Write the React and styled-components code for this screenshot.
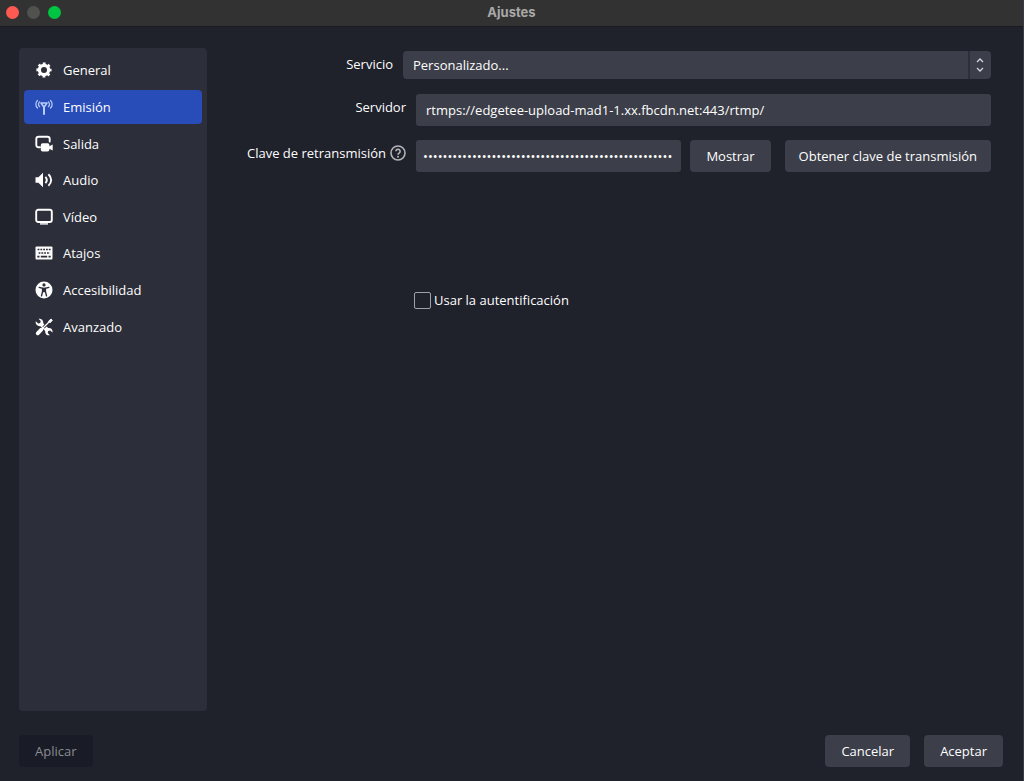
import { useState } from "react";
import styled, { createGlobalStyle } from "styled-components";

const GlobalStyle = createGlobalStyle`
  * {
    box-sizing: border-box;
  }

  body {
    margin: 0;
    background: #1f212b;
  }

  button,
  input,
  select {
    font: inherit;
    color: inherit;
  }
`;

/* Window */
const Window = styled.div`
  display: flex;
  flex-direction: column;
  min-height: 100vh;
  background: #1f212b;
  border-right: 1px solid #3a3c45;
  color: #fefefe;
  font-family: "Open Sans", sans-serif;
  font-size: 13px;
  line-height: 18px;
`;

const TitleBar = styled.header`
  display: grid;
  grid-template-columns: 1fr auto 1fr;
  align-items: center;
  height: 27px;
  padding: 0 6px 2px;
  background: #323232;
  border-bottom: 1px solid #191a20;
`;

const WindowControls = styled.div`
  display: flex;
  gap: 8px;
`;

const WindowControl = styled.button`
  width: 13px;
  height: 13px;
  padding: 0;
  border: none;
  border-radius: 50%;
  background: ${({ $color }) => $color};
`;

const Title = styled.h1`
  margin: 0;
  color: #a8a8a8;
  font-family: Inter, sans-serif;
  font-size: 13px;
  font-weight: 700;
  line-height: 18px;
`;

const Body = styled.div`
  display: flex;
  flex: 1;
  gap: 46px;
  padding: 21px 32px 24px 19px;
`;

/* Sidebar */
const Sidebar = styled.nav`
  flex: 0 0 188px;
  padding: 5px;
  border-radius: 4px;
  background: #2c2e39;
`;

const NavList = styled.ul`
  display: grid;
  grid-auto-rows: 1fr;
  gap: 2px;
  height: 291px;
  margin: 0;
  padding: 0;
  list-style: none;
`;

const NavItem = styled.a`
  display: flex;
  align-items: center;
  gap: 10px;
  height: 100%;
  padding: 0 11px;
  border-radius: 4px;
  background: ${({ $active }) => ($active ? "#284cb8" : "transparent")};
  color: inherit;
  text-decoration: none;
`;

const NavIcon = styled.svg`
  flex: none;
  width: 18px;
  height: 18px;
`;

/* Form */
const Form = styled.form`
  flex: 1;
  min-width: 0;
  padding-top: 3px;
`;

const Row = styled.div`
  display: grid;
  grid-template-columns: ${({ $label }) => $label}px minmax(0, 1fr);
  gap: 10px;
  align-items: start;
  margin-bottom: 14px;
`;

const Label = styled.label`
  display: flex;
  justify-content: flex-end;
  align-items: center;
  gap: 4px;
  padding-top: 4px;
  white-space: nowrap;
`;

const SelectBox = styled.div`
  position: relative;
  padding-bottom: 1px;
`;

const Select = styled.select`
  display: block;
  width: 100%;
  height: 28px;
  padding: 0 32px 0 10px;
  appearance: none;
  border: none;
  border-radius: 4px;
  background: #3c3e49;
`;

const SelectArrows = styled.svg`
  position: absolute;
  top: 0;
  right: 0;
  width: 23px;
  height: 28px;
  pointer-events: none;
`;

const Input = styled.input`
  display: block;
  flex: 1;
  width: 100%;
  min-width: 0;
  height: 32px;
  padding: 0 ${({ $pad }) => $pad}px;
  border: none;
  border-radius: 3px;
  background: #3c3e49;
`;

const KeyGroup = styled.div`
  display: flex;
  align-items: flex-end;
`;

const Button = styled.button`
  height: 32px;
  padding: 0 ${({ $wide }) => ($wide ? 14 : 16)}px;
  border: none;
  border-radius: 4px;
  background: #3c3e49;
  white-space: nowrap;

  &:disabled {
    background: #191b26;
    color: #8b8c92;
  }
`;

const KeyButton = styled(Button)`
  margin-left: ${({ $gap }) => $gap}px;
`;

const CheckLabel = styled.label`
  display: flex;
  align-items: center;
  gap: 3px;
  width: max-content;
  margin: 119px 0 0 161px;
`;

const Checkbox = styled.input`
  width: 17px;
  height: 17px;
  margin: 0;
  appearance: none;
  border: 1px solid #a0a1a6;
  border-radius: 2px;

  &:checked {
    background: #284cb8;
  }
`;

const Footer = styled.footer`
  display: flex;
  justify-content: space-between;
  padding: 0 20px 14px 19px;
`;

const FooterGroup = styled.div`
  display: flex;
  gap: 14px;
`;

/* Icons */
const GearIcon = () => (
  <NavIcon viewBox="0 0 18 18" aria-hidden="true">
    <circle cx="9" cy="9" r="4.6" fill="none" stroke="#fefefe" strokeWidth="3.2" />
    <circle cx="9" cy="9" r="6.6" fill="none" stroke="#fefefe" strokeWidth="2" strokeDasharray="2.8 2.38" strokeDashoffset="1.4" />
  </NavIcon>
);

const AntennaIcon = () => (
  <NavIcon viewBox="0 0 18 18" fill="none" stroke="#b9cdfa" strokeWidth="1.2" strokeLinecap="round" aria-hidden="true">
    <path d="M2.5 2.5C.3 4.5.3 8 2.5 10M4.6 3.8c-1.3 1.4-1.3 3.5 0 4.9M15.5 2.5c2.2 2 2.2 5.5 0 7.5M13.4 3.8c1.3 1.4 1.3 3.5 0 4.9" />
    <path d="M6 5h6L9 9.2Z" strokeWidth="1.6" strokeLinejoin="round" />
    <path d="M9 9v7" strokeWidth="2" />
  </NavIcon>
);

const OutputIcon = () => (
  <NavIcon viewBox="0 0 18 18" aria-hidden="true">
    <path d="M5 12.2H3.4A2.1 2.1 0 0 1 1.3 10V4a2.3 2.3 0 0 1 2.3-2.3h8.8A2.3 2.3 0 0 1 14.7 4v2.6" fill="none" stroke="#fefefe" strokeWidth="1.9" strokeLinecap="round" />
    <rect x="5.8" y="8.2" width="8.6" height="8.4" rx="1.8" fill="#fefefe" />
    <path d="m13.8 11.6 3.9-2.2v6.2l-3.9-2.2Z" fill="#fefefe" />
  </NavIcon>
);

const SpeakerIcon = () => (
  <NavIcon viewBox="0 0 18 18" aria-hidden="true">
    <path d="M.5 6.2h2.9L8 1.8v14.4l-4.6-4.4H.5Z" fill="#fefefe" />
    <path d="M10.4 5.8c1.7 1.9 1.7 4.5 0 6.4M13.4 3.3c3.7 3.3 3.7 8.1 0 11.4" fill="none" stroke="#fefefe" strokeWidth="1.9" />
  </NavIcon>
);

const MonitorIcon = () => (
  <NavIcon viewBox="0 0 18 18" aria-hidden="true">
    <rect x="1.2" y="1.8" width="15.6" height="12.2" rx="2" fill="none" stroke="#fefefe" strokeWidth="1.9" />
    <path d="M5 15.9h8" stroke="#fefefe" strokeWidth="1.4" />
  </NavIcon>
);

const KeyboardIcon = () => (
  <NavIcon viewBox="0 0 18 18" aria-hidden="true">
    <rect x=".5" y="2.5" width="17" height="13" rx="1" fill="#fefefe" />
    <g stroke="#2c2e39" strokeWidth="1.7">
      <path d="M2.6 5.5h13" strokeDasharray="1.8 1" />
      <path d="M3.6 9h11.5" strokeDasharray="1.8 1" />
      <path d="M2.3 12.6h2.2M5.8 12.6h6.4M13.5 12.6h2.2" />
    </g>
  </NavIcon>
);

const AccessibilityIcon = () => (
  <NavIcon viewBox="0 0 18 18" aria-hidden="true">
    <circle cx="9" cy="9" r="8.5" fill="#fefefe" />
    <circle cx="9" cy="3.9" r="1.6" fill="#2c2e39" />
    <path d="M4.2 6.4 7.6 7.3v3L6.5 14.8M13.8 6.4l-3.4.9v3l1.1 4.5" fill="none" stroke="#2c2e39" strokeWidth="1.4" strokeLinecap="round" />
    <path d="M7.2 6.7h3.6v4.5H7.2Z" fill="#2c2e39" />
  </NavIcon>
);

const ToolsIcon = () => (
  <NavIcon viewBox="0 0 18 18" aria-hidden="true">
    <path d="M.8 3.3 3.2 5.6l2-.5.5-2L3.500.8c2.400-.7 5.200 1.200 4.700 4.500l5 4.700c3.200-.5 5 2.200 4.200 4.600l-2.200-2.100-2 .5-.5 2 2.200 2.200c-2.500.7-5.200-1.100-4.700-4.300L5.400 8.200C2.100 8.600.1 5.800.8 3.300Z" fill="#fefefe" />
    <path d="m8.5 9.5 6.5-6.5" stroke="#2c2e39" strokeWidth="3" />
    <path d="m7 11 7.500-7.500" stroke="#fefefe" strokeWidth="1.3" />
    <path d="m13.5 3.2 2.6-2.2 1.2 1.2-2.2 2.6Z" fill="#fefefe" stroke="#fefefe" strokeLinejoin="round" />
    <path d="m2.7 15.3 3.6-3.6" stroke="#fefefe" strokeWidth="3.8" strokeLinecap="round" />
  </NavIcon>
);

const HelpSvg = styled.svg`
  flex: none;
  width: 16px;
  height: 16px;
`;

const HelpIcon = () => (
  <HelpSvg viewBox="0 0 16 16" fill="none" stroke="#b4b5b9" role="img" aria-label="Ayuda">
    <circle cx="8" cy="8" r="7" strokeWidth="1.6" />
    <path d="M5.9 6.3a2.1 2.1 0 1 1 3.2 1.8c-.8.5-1.1.8-1.1 1.6" strokeWidth="1.6" />
    <circle cx="8" cy="11.7" r="1" fill="#b4b5b9" stroke="none" />
  </HelpSvg>
);

const sections = [
  { name: "General", Icon: GearIcon },
  { name: "Emisión", Icon: AntennaIcon },
  { name: "Salida", Icon: OutputIcon },
  { name: "Audio", Icon: SpeakerIcon },
  { name: "Vídeo", Icon: MonitorIcon },
  { name: "Atajos", Icon: KeyboardIcon },
  { name: "Accesibilidad", Icon: AccessibilityIcon },
  { name: "Avanzado", Icon: ToolsIcon },
];

const App = () => {
  const [active, setActive] = useState("Emisión");
  const [server, setServer] = useState("rtmps://edgetee-upload-mad1-1.xx.fbcdn.net:443/rtmp/");
  const [streamKey, setStreamKey] = useState("x".repeat(51));
  const [showKey, setShowKey] = useState(false);
  const [useAuth, setUseAuth] = useState(false);

  return (
    <Window>
      <GlobalStyle />
      <TitleBar>
        <WindowControls>
          <WindowControl $color="#ff5a52" aria-label="Cerrar" />
          <WindowControl $color="#51514f" aria-label="Minimizar" />
          <WindowControl $color="#00c543" aria-label="Ampliar" />
        </WindowControls>
        <Title>Ajustes</Title>
      </TitleBar>

      <Body>
        <Sidebar>
          <NavList>
            {sections.map(({ name, Icon }) => (
              <li key={name}>
                <NavItem href="#" $active={name === active} onClick={() => setActive(name)}>
                  <Icon />
                  {name}
                </NavItem>
              </li>
            ))}
          </NavList>
        </Sidebar>

        <Form onSubmit={(e) => e.preventDefault()}>
          <Row $label={140}>
            <Label htmlFor="service">Servicio</Label>
            <SelectBox>
              <Select id="service">
                <option>Personalizado...</option>
              </Select>
              <SelectArrows viewBox="0 0 23 28" fill="none" aria-hidden="true">
                <path d="M1 0v28" stroke="#1f212b" />
                <path d="m9 11 3-3 3 3M9 17l3 3 3-3" stroke="#d6d7da" strokeWidth="1.3" />
              </SelectArrows>
            </SelectBox>
          </Row>

          <Row $label={153}>
            <Label htmlFor="server">Servidor</Label>
            <Input id="server" $pad={10} value={server} onChange={(e) => setServer(e.target.value)} />
          </Row>

          <Row $label={153}>
            <Label htmlFor="key">
              Clave de retransmisión
              <HelpIcon />
            </Label>
            <KeyGroup>
              <Input
                id="key"
                $pad={7}
                type={showKey ? "text" : "password"}
                value={streamKey}
                onChange={(e) => setStreamKey(e.target.value)}
              />
              <KeyButton type="button" $gap={9} onClick={() => setShowKey(!showKey)}>
                Mostrar
              </KeyButton>
              <KeyButton type="button" $gap={14} $wide>
                Obtener clave de transmisión
              </KeyButton>
            </KeyGroup>
          </Row>

          <CheckLabel>
            <Checkbox type="checkbox" checked={useAuth} onChange={(e) => setUseAuth(e.target.checked)} />
            Usar la autentificación
          </CheckLabel>
        </Form>
      </Body>

      <Footer>
        <Button disabled>Aplicar</Button>
        <FooterGroup>
          <Button>Cancelar</Button>
          <Button>Aceptar</Button>
        </FooterGroup>
      </Footer>
    </Window>
  );
};

export default App;
